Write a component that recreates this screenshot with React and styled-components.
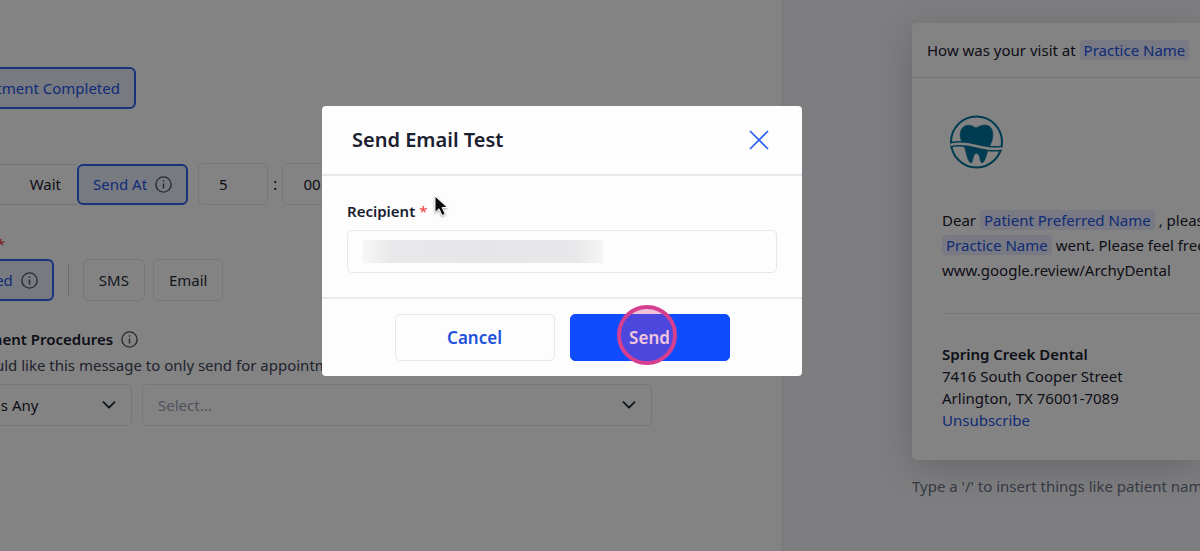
import React, { useState } from "react";
import styled, { createGlobalStyle } from "styled-components";

export default function App() {
  const [recipient, setRecipient] = useState("");
  const [hour, setHour] = useState("5");
  const [minute, setMinute] = useState("00");

  return (
    <>
      <GlobalStyle />
      <Page>
        <Editor>
          <Options>
            <Choice type="button" $active>
              Appointment Completed
            </Choice>
          </Options>

          <Timing>
            <Segment>
              <SegmentOption type="button">Wait</SegmentOption>
              <SegmentActive type="button" $active>
                Send At <InfoIcon />
              </SegmentActive>
            </Segment>
            <TimeFields>
              <TimeInput
                aria-label="Hour"
                value={hour}
                onChange={(e) => setHour(e.target.value)}
              />
              <span>:</span>
              <TimeInput
                aria-label="Minute"
                value={minute}
                onChange={(e) => setMinute(e.target.value)}
              />
            </TimeFields>
          </Timing>

          <MethodLabel>
            <Required>*</Required>
          </MethodLabel>
          <Options>
            <Choice type="button" $active>
              Preferred <InfoIcon />
            </Choice>
            <Separator />
            <Choice type="button">SMS</Choice>
            <Choice type="button">Email</Choice>
          </Options>

          <Procedures>
            <h3>
              Appointment Procedures <InfoIcon />
            </h3>
            <p>If you would like this message to only send for appointments</p>
            <SelectRow>
              <SelectBox>
                <select aria-label="Condition" defaultValue="any">
                  <option value="any">Contains Any</option>
                </select>
                <Chevron />
              </SelectBox>
              <SelectBox $placeholder>
                <select aria-label="Procedures" defaultValue="">
                  <option value="">Select...</option>
                </select>
                <Chevron />
              </SelectBox>
            </SelectRow>
          </Procedures>
        </Editor>

        <Preview>
          <Card>
            <Subject>
              How was your visit at <Tag>Practice Name</Tag>
            </Subject>
            <Message>
              <ToothLogo />
              <Paragraph>
                Dear <Tag>Patient Preferred Name</Tag> , please
                <br />
                <Tag>Practice Name</Tag> went. Please feel free
                <br />
                www.google.review/ArchyDental
              </Paragraph>
              <Address>
                <strong>Spring Creek Dental</strong>
                <span>7416 South Cooper Street</span>
                <span>Arlington, TX 76001-7089</span>
                <a href="#unsubscribe">Unsubscribe</a>
              </Address>
            </Message>
          </Card>
          <Hint>Type a '/' to insert things like patient names</Hint>
        </Preview>
      </Page>

      <Overlay>
        <Modal role="dialog" aria-modal="true" aria-labelledby="modal-title">
          <ModalHeader>
            <h2 id="modal-title">Send Email Test</h2>
            <CloseButton type="button" aria-label="Close">
              <svg width="20" height="20" viewBox="0 0 20 20" fill="none">
                <path d="M1 1l18 18M19 1L1 19" stroke="#2a5ff0" strokeWidth="1.7" />
              </svg>
            </CloseButton>
          </ModalHeader>
          <ModalBody>
            <label htmlFor="recipient">
              Recipient <Required>*</Required>
            </label>
            <RecipientInput
              id="recipient"
              type="email"
              value={recipient}
              onChange={(e) => setRecipient(e.target.value)}
            />
            <Pointer width="16" height="26" viewBox="0 0 16 26">
              <path
                d="M2 2v16.500l4-3.700 3 6.700 3.200-1.400-3-6.600h5.300z"
                fill="#0b0b0b"
                stroke="#fff"
                strokeWidth="1"
              />
            </Pointer>
          </ModalBody>
          <ModalFooter>
            <ModalButton type="button">Cancel</ModalButton>
            <ModalButton type="button" $primary>
              Send
              <ClickRing />
            </ModalButton>
          </ModalFooter>
        </Modal>
      </Overlay>
    </>
  );
}

function InfoIcon() {
  return (
    <svg width="17" height="17" viewBox="0 0 17 17" fill="none" stroke="#4b5563">
      <circle cx="8.5" cy="8.5" r="7.6" strokeWidth="1.4" />
      <path d="M8.500 7.500v5" strokeWidth="1.5" />
      <circle cx="8.5" cy="5" r=".5" />
    </svg>
  );
}

function Chevron() {
  return (
    <svg width="14" height="8" viewBox="0 0 14 8" fill="none">
      <path
        d="M1.500 1.200L7 6.700l5.500-5.500"
        stroke="#1f2937"
        strokeWidth="1.8"
        strokeLinecap="round"
        strokeLinejoin="round"
      />
    </svg>
  );
}

function ToothLogo() {
  return (
    <Logo width="68" height="68" viewBox="0 0 68 68">
      <clipPath id="logo-clip">
        <circle cx="34.5" cy="34" r="26.5" />
      </clipPath>
      <circle cx="34.5" cy="34" r="25.5" fill="none" stroke="#00759e" strokeWidth="2" />
      <path
        d="M34 20C31 18 27.500 16.500 24 17.500C18.500 19.500 17.500 25 18.500 30C19.200 34 22 37 23.500 42C24.500 47 25.500 51 27.500 54C28.500 55.300 30 55 30.500 53C31.200 50 31.500 45.500 34.400 45.500C37.300 45.500 37.800 50 38.500 53C39 55 40.500 55.300 41.500 54C44 50.500 44.500 46 46 42C48 37 50 34 50.600 30C51.500 24.500 50.500 19 45 17.300C41 16.300 37.500 18 34 20z"
        fill="#00759e"
        stroke="#00759e"
        strokeWidth=".6"
      />
      <g clipPath="url(#logo-clip)" fill="none">
        <path d="M6 37.500C14 35 22 35 34 38S52 41.500 63 40" stroke="#00759e" strokeWidth="5.6" />
        <path d="M6 37.500C14 35 22 35 34 38S52 41.500 63 40" stroke="#fff" strokeWidth="2.4" />
      </g>
    </Logo>
  );
}

const GlobalStyle = createGlobalStyle`
  * {
    box-sizing: border-box;
  }
  body {
    margin: 0;
    background: #fff;
    color: #1b2030;
    font-family: "Noto Sans", "Open Sans", sans-serif;
    font-size: 15px;
    line-height: 22px;
    overflow: hidden;
  }
  button, input, select {
    font: inherit;
    color: inherit;
    margin: 0;
  }
  h2, h3, p {
    margin: 0;
  }
`;

const Page = styled.div`
  display: grid;
  grid-template-columns: minmax(0, 1fr) 418px;
  min-height: 100vh;
`;

/* the form is scrolled sideways, its first column lies past the left edge */
const Editor = styled.main`
  padding-top: 67px;
  margin-left: -70px;
  white-space: nowrap;
`;

const Options = styled.div`
  display: flex;
  align-items: center;
  gap: 8px;
`;

const Choice = styled.button`
  display: flex;
  align-items: center;
  gap: 8px;
  height: 42px;
  padding: 0 ${({ $active }) => ($active ? "14px" : "15px")};
  border-radius: 6px;
  border: ${({ $active }) => ($active ? "2px solid #2f62f0" : "1px solid #e6e8ee")};
  background: ${({ $active }) => ($active ? "#eaeefe" : "#fff")};
  color: ${({ $active }) => ($active ? "#2355e6" : "#2b303d")};
`;

const Timing = styled.div`
  display: flex;
  align-items: center;
  gap: 10px;
  margin-top: 54px;
`;

const Segment = styled.div`
  display: flex;
  align-items: center;
`;

const SegmentOption = styled.button`
  width: 147px;
  height: 41px;
  padding: 0 16px;
  text-align: right;
  border: 1px solid #dbe0ea;
  border-right: 0;
  background: #fff;
`;

const SegmentActive = styled(Choice)`
  height: 41px;
`;

const TimeFields = styled.div`
  display: flex;
  align-items: center;
  gap: 5px;
  font-size: 16px;
`;

const TimeInput = styled.input`
  width: 70px;
  height: 42px;
  padding: 0 20px;
  border: 1px solid #e6e8ee;
  border-radius: 5px;
  background: #fff;
  font-size: 15px;
`;

const Required = styled.span`
  color: #f0383e;
  font-weight: 400;
`;

const MethodLabel = styled.div`
  width: 75px;
  margin: 28px 0 4px;
  text-align: right;
`;

const Separator = styled.span`
  width: 1px;
  height: 30px;
  margin: 0 6px;
  background: #cfd3dd;
`;

const Procedures = styled.section`
  margin-top: 27px;

  h3 {
    display: flex;
    align-items: center;
    gap: 8px;
    font-size: 15px;
    font-weight: 600;
  }
  p {
    margin: 4px 0 8px;
    color: #3d4658;
  }
`;

const SelectRow = styled.div`
  display: grid;
  grid-template-columns: 202px 510px;
  gap: 10px;
`;

const SelectBox = styled.div`
  display: grid;
  align-items: center;

  select,
  svg {
    grid-area: 1 / 1;
  }
  select {
    height: 42px;
    padding: 0 15px;
    appearance: none;
    border: 1px solid #e6e8ee;
    border-radius: 5px;
    background: #fff;
    color: ${({ $placeholder }) => ($placeholder ? "#9aa3b5" : "inherit")};
  }
  svg {
    justify-self: end;
    margin-right: 16px;
    pointer-events: none;
  }
`;

const Preview = styled.aside`
  padding: 23px 0 0 129px;
  border-left: 1px solid #dfe1e8;
  background: #f5f5f9;
  overflow: hidden;
  white-space: nowrap;
`;

const Card = styled.article`
  border-radius: 5px 0 0 5px;
  background: #fff;
  box-shadow: 0 8px 36px rgba(30, 32, 50, 0.2);
`;

const Subject = styled.header`
  height: 55px;
  padding: 16px 15px;
  border-bottom: 1px solid #dfe1e8;
`;

const Tag = styled.span`
  display: inline-block;
  padding: 0 4px;
  border-radius: 4px;
  line-height: 20px;
  background: #e9ecfd;
  color: #2355e6;
`;

const Message = styled.div`
  padding: 30px 0 29px 30px;
`;

const Logo = styled.svg`
  display: block;
`;

const Paragraph = styled.p`
  padding: 32px 0 30px;
  border-bottom: 1px solid #e6e8ee;
  line-height: 25px;
`;

const Address = styled.address`
  display: flex;
  flex-direction: column;
  margin-top: 29px;
  font-style: normal;

  strong {
    font-weight: 600;
  }
  a {
    color: #2355e6;
    text-decoration: none;
  }
`;

const Hint = styled.p`
  margin-top: 15px;
  color: #667085;
`;

const Overlay = styled.div`
  position: fixed;
  inset: 0;
  display: flex;
  align-items: center;
  justify-content: center;
  padding: 0 76px 69px 0;
  background: rgba(0, 0, 0, 0.485);
`;

const Modal = styled.div`
  width: 480px;
  border-radius: 4px;
  background: #fdfdfd;
`;

const ModalHeader = styled.header`
  display: flex;
  align-items: center;
  justify-content: space-between;
  height: 70px;
  padding: 0 33px 0 30px;
  border-bottom: 2px solid #e6e8ee;

  h2 {
    font-size: 20px;
    font-weight: 600;
    line-height: 28px;
  }
`;

const CloseButton = styled.button`
  display: flex;
  padding: 0;
  border: 0;
  background: none;
`;

const ModalBody = styled.div`
  position: relative;
  padding: 24px 25px;

  label {
    display: block;
    margin-bottom: 8px;
    font-weight: 600;
  }
`;

/* the address stays hidden behind a grey smear */
const RecipientInput = styled.input`
  display: block;
  width: 100%;
  height: 43px;
  padding: 0 15px;
  border: 1px solid #e6e7ea;
  border-radius: 5px;
  background: linear-gradient(90deg, #f7f7f8, #e9e9eb 12%, #e6e6e8 50%, #e8e8ea 88%, #f5f5f6)
    15px 9px / 240px 23px no-repeat #fdfdfd;
`;

const Pointer = styled.svg`
  position: absolute;
  top: 18px;
  left: 111px;
  filter: drop-shadow(0 1px 1px rgba(0, 0, 0, 0.35));
`;

const ModalFooter = styled.footer`
  display: flex;
  justify-content: center;
  gap: 15px;
  padding: 15px;
  border-top: 2px solid #e9eaee;
`;

const ModalButton = styled.button`
  position: relative;
  width: 160px;
  height: 47px;
  border-radius: 5px;
  border: 1px solid ${({ $primary }) => ($primary ? "#104cff" : "#e6e7ea")};
  background: ${({ $primary }) => ($primary ? "#104cff" : "#fdfdfd")};
  color: ${({ $primary }) => ($primary ? "#fff" : "#1f50dc")};
  font-size: 17px;
  font-weight: 600;
`;

const ClickRing = styled.span`
  position: absolute;
  top: -10px;
  left: 46px;
  width: 60px;
  height: 60px;
  border: 4px solid #d63f8f;
  border-radius: 50%;
  background: rgba(214, 63, 143, 0.3);
`;
